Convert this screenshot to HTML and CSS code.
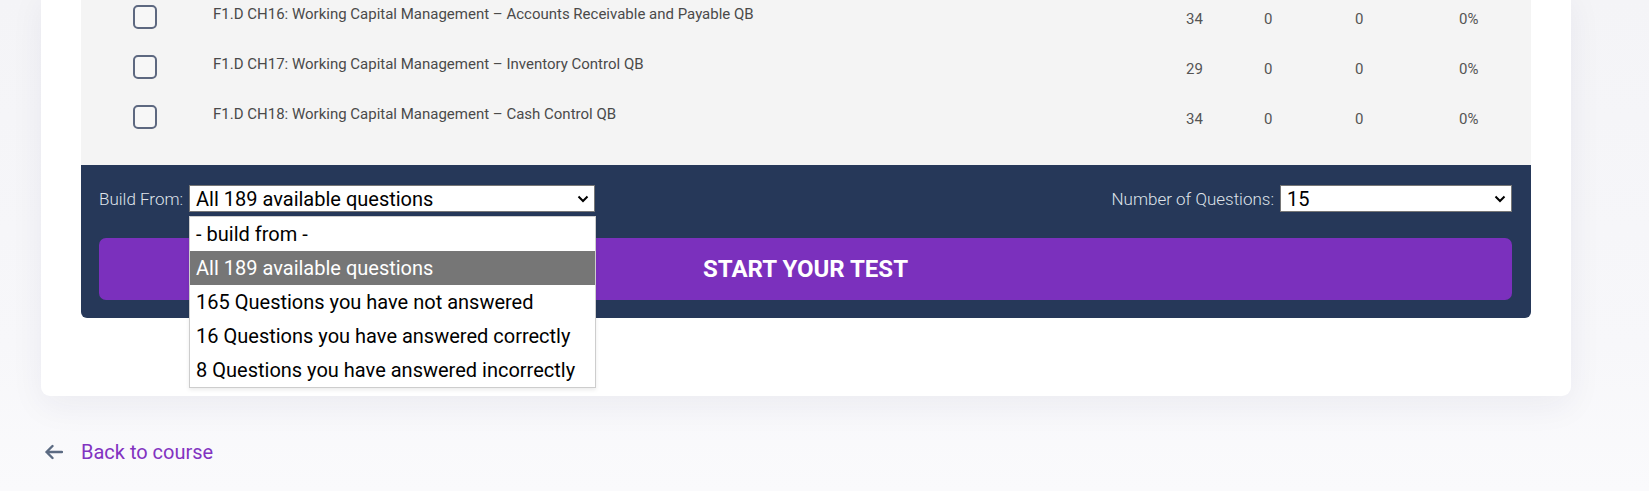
FILE: index.html
```html
<!DOCTYPE html>
<html lang="en">
<head>
<meta charset="utf-8">
<title>Build a test</title>
<link rel="stylesheet" href="styles.css">
</head>
<body>
<div class="page">
  <div class="card">
    <div class="table">
      <div class="row">
        <span class="check"></span>
        <span class="title">F1.D CH16: Working Capital Management – Accounts Receivable and Payable QB</span>
        <span class="num">34</span><span class="num">0</span><span class="num">0</span><span class="num">0%</span>
      </div>
      <div class="row">
        <span class="check"></span>
        <span class="title">F1.D CH17: Working Capital Management – Inventory Control QB</span>
        <span class="num">29</span><span class="num">0</span><span class="num">0</span><span class="num">0%</span>
      </div>
      <div class="row">
        <span class="check"></span>
        <span class="title">F1.D CH18: Working Capital Management – Cash Control QB</span>
        <span class="num">34</span><span class="num">0</span><span class="num">0</span><span class="num">0%</span>
      </div>
    </div>
    <div class="builder">
      <div class="controls">
        <div class="field">
          <span class="label">Build From:</span>
          <div class="select-wrap">
            <div class="select select-wide">
              <span>All 189 available questions</span>
              <svg class="chev" width="12" height="8" viewBox="0 0 12 8"><path d="M1.5 1.5 L6 6 L10.5 1.5" fill="none" stroke="#000" stroke-width="2"/></svg>
            </div>
            <ul class="dropdown">
              <li class="opt">- build from -</li>
              <li class="opt opt-active">All 189 available questions</li>
              <li class="opt">165 Questions you have not answered</li>
              <li class="opt">16 Questions you have answered correctly</li>
              <li class="opt">8 Questions you have answered incorrectly</li>
            </ul>
          </div>
        </div>
        <div class="field">
          <span class="label">Number of Questions:</span>
          <div class="select select-narrow">
            <span>15</span>
            <svg class="chev" width="12" height="8" viewBox="0 0 12 8"><path d="M1.5 1.5 L6 6 L10.5 1.5" fill="none" stroke="#000" stroke-width="2"/></svg>
          </div>
        </div>
      </div>
      <button class="start">START YOUR TEST</button>
    </div>
  </div>
  <a class="back" href="#">
    <svg class="back-arrow" width="19" height="16" viewBox="0 0 19 16"><path d="M18 8 H2.5 M8.5 2 L2.5 8 L8.5 14" fill="none" stroke="#5b6a82" stroke-width="2.4" stroke-linecap="round" stroke-linejoin="round"/></svg>
    <span>Back to course</span>
  </a>
</div>
</body>
</html>
```
FILE: styles.css
```css
* { box-sizing: border-box; }
html, body { margin: 0; padding: 0; }
body {
  background: linear-gradient(180deg, #f4f4f7 0%, #f7f7fa 70%, #fafafc 100%);
  font-family: Roboto, "Liberation Sans", Arial, sans-serif;
  height: 491px;
  overflow: hidden;
}
.page {
  padding-left: 41px;
}
.card {
  width: 1530px;
  margin-top: -9px;
  background: #ffffff;
  border-radius: 0 0 9px 9px;
  padding: 0 40px 78px 40px;
  box-shadow: 0 10px 34px rgba(40, 40, 80, 0.06);
}
.table {
  background: #f4f4f4;
  padding-bottom: 24px;
}
.row {
  display: grid;
  grid-template-columns: 52px 24px 56px 1fr 78px 91px 104px 72px;
  height: 50px;
  align-items: start;
}
.check {
  grid-column: 2;
  margin-top: 14px;
  width: 24px;
  height: 24px;
  border: 2px solid #5d6880;
  border-radius: 5px;
  background: #f7f7f7;
}
.title {
  grid-column: 4;
  margin-top: 13px;
  font-size: 15px;
  line-height: 20px;
  color: #4a4a4a;
}
.num {
  margin-top: 18px;
  font-size: 15px;
  line-height: 20px;
  color: #555555;
}
.builder {
  background: #263859;
  border-radius: 0 0 6px 6px;
  padding: 20px 19px 18px 18px;
  display: flex;
  flex-direction: column;
  gap: 26px;
}
.controls {
  display: flex;
  justify-content: space-between;
  align-items: center;
}
.field {
  display: flex;
  align-items: center;
  gap: 6px;
}
.label {
  font-family: "Roboto Light", Roboto, "Liberation Sans", sans-serif;
  font-weight: 300;
  font-size: 17px;
  color: #dfe3ea;
}
.select-wrap {
  position: relative;
}
.select {
  height: 27px;
  background: #ffffff;
  border: 1px solid #767676;
  display: flex;
  align-items: center;
  justify-content: space-between;
  padding: 0 5px 0 6px;
  font-size: 20px;
  color: #000;
}
.select-wide { width: 406px; }
.select-narrow { width: 232px; }
.dropdown {
  position: absolute;
  left: 0;
  top: 31px;
  width: 407px;
  margin: 0;
  padding: 0;
  list-style: none;
  background: #ffffff;
  border: 1px solid #cdcdcd;
  box-shadow: 0 2px 4px rgba(0,0,0,0.08);
  z-index: 5;
}
.opt {
  height: 34px;
  line-height: 34px;
  padding-left: 6px;
  font-size: 20px;
  color: #000;
  white-space: nowrap;
}
.opt-active {
  background: #767676;
  color: #ffffff;
}
.start {
  height: 62px;
  border: 0;
  border-radius: 7px;
  background: #7b30bd;
  color: #ffffff;
  font-family: Roboto, "Liberation Sans", Arial, sans-serif;
  font-weight: 700;
  font-size: 24px;
  letter-spacing: 0;
}
.back {
  display: flex;
  align-items: center;
  gap: 18px;
  margin-top: 43px;
  margin-left: 3px;
  text-decoration: none;
  color: #8233c1;
  font-size: 20px;
  line-height: 26px;
}
```
